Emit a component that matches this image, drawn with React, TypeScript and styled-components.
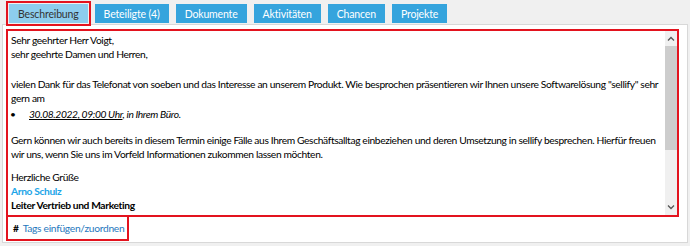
import styled, { createGlobalStyle } from "styled-components";

const GlobalStyle = createGlobalStyle`
  html, body {
    margin: 0;
    padding: 0;
    background: #f0f0f0;
  }
  body {
    font-family: "Lato", "Noto Sans", sans-serif;
    font-size: 10.25px;
    letter-spacing: -0.37px;
    color: #000;
  }
`;

const Page = styled.div`
  width: 690px;
  height: 246px;
  overflow: hidden;
`;

const TabBar = styled.div`
  display: flex;
  align-items: flex-start;
  gap: 7px;
  height: 24px;
  box-sizing: border-box;
  padding: 4px 0 0 9px;
`;

const Tab = styled.div<{ $active?: boolean }>`
  height: 19px;
  padding: 0 9px;
  display: flex;
  align-items: center;
  background: ${(p) => (p.$active ? "#8dcdee" : "#35a4dd")};
  color: ${(p) => (p.$active ? "#333" : "#fff")};
  font-size: 10.5px;
  letter-spacing: -0.15px;
  white-space: nowrap;
  outline: ${(p) => (p.$active ? "2px solid #e3131e" : "none")};
  outline-offset: 1px;
`;

const Panel = styled.div`
  margin: 0 2px;
  height: 219px;
  box-sizing: border-box;
  background: #fff;
  border: 1px solid #d8d8d8;
  padding: 4px 8px 0 3px;
`;

const Editor = styled.div`
  display: flex;
  height: 188px;
  box-sizing: border-box;
  border: 2px solid #e3131e;
`;

const Content = styled.div`
  flex: 1;
  padding: 2px 2px 2px 3px;
  line-height: 14px;
  overflow: hidden;
`;

const Para = styled.p<{ $gap?: number }>`
  margin: 0 0 ${(p) => p.$gap ?? 0}px;
  white-space: nowrap;
`;

const BulletItem = styled.div`
  display: flex;
  margin: 0 0 12px;
  font-style: italic;
  &::before {
    content: "•";
    font-style: normal;
    width: 19px;
    margin-left: -1px;
    padding-left: 0;
  }
`;

const DateLink = styled.span`
  text-decoration: underline;
`;

const Signature = styled.span`
  color: #1ca5e8;
  font-weight: 700;
`;

const Role = styled.span`
  font-weight: 700;
`;

const Scrollbar = styled.div`
  width: 12px;
  background: #f0f0f0;
  display: flex;
  flex-direction: column;
  align-items: center;
`;

const Arrow = styled.div`
  height: 15px;
  display: flex;
  align-items: center;
  justify-content: center;
`;

const Thumb = styled.div`
  width: 100%;
  height: 104px;
  background: #cdcdcd;
`;

const Track = styled.div`
  flex: 1;
`;

const TagsRow = styled.div`
  display: flex;
  align-items: center;
  gap: 4px;
  width: 123px;
  height: 24px;
  box-sizing: border-box;
  border: 2px solid #e3131e;
  border-top: none;
  padding-left: 5px;
  font-size: 10.25px;
  letter-spacing: -0.3px;
`;

const Hash = styled.span`
  font-weight: 700;
`;

const TagLink = styled.a`
  color: #1f78bd;
  text-decoration: none;
  white-space: nowrap;
`;

const Chevron = ({ up }: { up?: boolean }) => (
  <svg width="8" height="5" viewBox="0 0 8 5">
    <path
      d={up ? "M1 4.5 L4 1.5 L7 4.5" : "M1 0.5 L4 3.5 L7 0.5"}
      fill="none"
      stroke="#555"
      strokeWidth="1.3"
    />
  </svg>
);

const tabs = ["Beschreibung", "Beteiligte (4)", "Dokumente", "Aktivitäten", "Chancen", "Projekte"];

const App = () => {
  return (
    <Page>
      <GlobalStyle />
      <TabBar>
        {tabs.map((t, i) => (
          <Tab key={t} $active={i === 0}>
            {t}
          </Tab>
        ))}
      </TabBar>
      <Panel>
        <Editor>
          <Content>
            <Para $gap={16}>
              Sehr geehrter Herr Voigt,
              <br />
              sehr geehrte Damen und Herren,
            </Para>
            <Para $gap={2}>
              vielen Dank für das Telefonat von soeben und das Interesse an unserem Produkt. Wie besprochen
              präsentieren wir Ihnen unsere Softwarelösung "sellify" sehr
              <br />
              gern am
            </Para>
            <BulletItem>
              <span>
                <DateLink>30.08.2022, 09:00 Uhr</DateLink>, in Ihrem Büro.
              </span>
            </BulletItem>
            <Para $gap={9}>
              Gern können wir auch bereits in diesem Termin einige Fälle aus Ihrem Geschäftsalltag einbeziehen
              und deren Umsetzung in sellify besprechen. Hierfür freuen
              <br />
              wir uns, wenn Sie uns im Vorfeld Informationen zukommen lassen möchten.
            </Para>
            <Para>
              Herzliche Grüße
              <br />
              <Signature>Arno Schulz</Signature>
              <br />
              <Role>Leiter Vertrieb und Marketing</Role>
            </Para>
          </Content>
          <Scrollbar>
            <Arrow>
              <Chevron up />
            </Arrow>
            <Thumb />
            <Track />
            <Arrow>
              <Chevron />
            </Arrow>
          </Scrollbar>
        </Editor>
        <TagsRow>
          <Hash>#</Hash>
          <TagLink href="#">Tags einfügen/zuordnen</TagLink>
        </TagsRow>
      </Panel>
    </Page>
  );
};

export default App;
